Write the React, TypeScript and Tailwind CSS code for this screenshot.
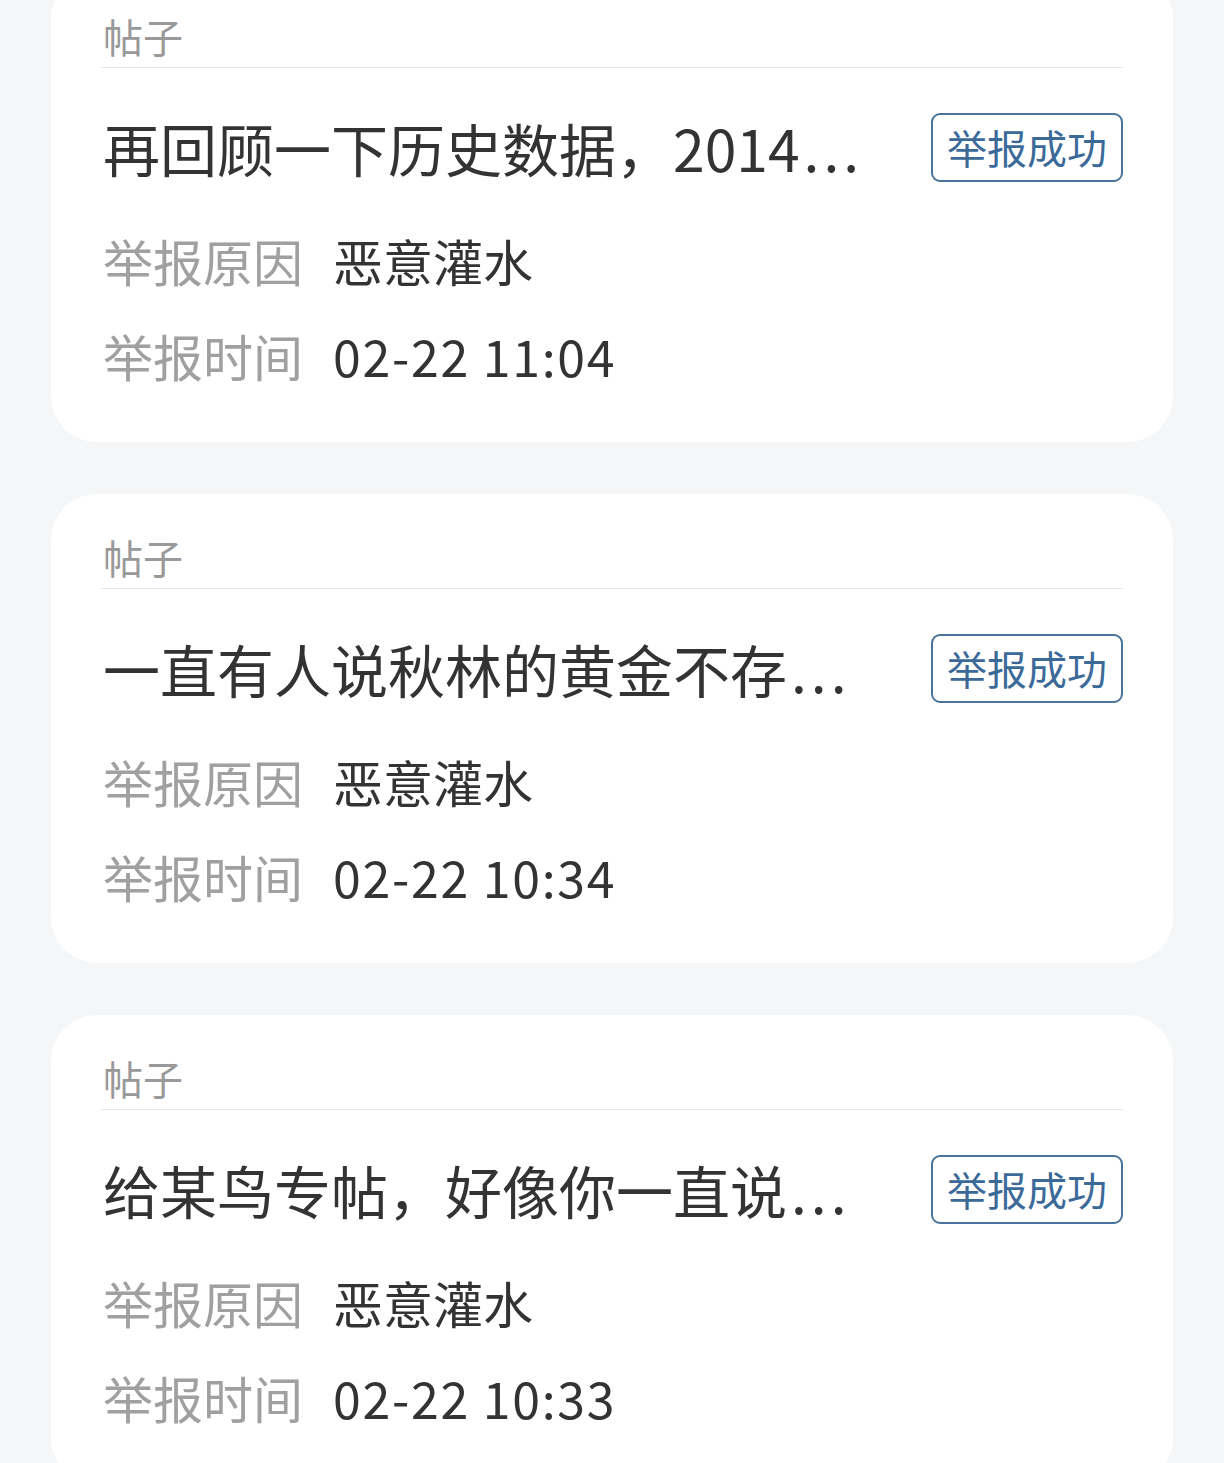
import React from "react";

const items = [
  { title: "再回顾一下历史数据，2014", reason: "恶意灌水", time: "02-22 11:04" },
  { title: "一直有人说秋林的黄金不存", reason: "恶意灌水", time: "02-22 10:34" },
  { title: "给某鸟专帖，好像你一直说", reason: "恶意灌水", time: "02-22 10:33" },
];

function Card({ title, reason, time }: { title: string; reason: string; time: string }) {
  return (
    <div className="rounded-[46px] bg-white px-[50px] pb-[52px]">
      <div className="h-[95px] pt-[35px] border-b border-[#e6e6e6]">
        <div className="text-[40px] leading-[56px] text-[#999999] pl-[2px]">帖子</div>
      </div>
      <div className="mt-[39px] h-[80px] flex items-center">
        <div className="flex-1 min-w-0 pl-[2px] pr-[40px]">
          <div className="text-[57px] leading-[80px] text-[#333333] whitespace-nowrap">
            {title}
            <span className="pl-[4px] tracking-[4px]">...</span>
          </div>
        </div>
        <div className="shrink-0 w-[192px] h-[69px] rounded-[9px] border-2 border-[#4a7399] flex items-center justify-center text-[40px] leading-none text-[#3b6a99]">
          举报成功
        </div>
      </div>
      <div className="mt-[38px] h-[70px] flex items-center pl-[2px] text-[50px] leading-[70px]">
        <span className="text-[#a0a0a0] w-[230px] shrink-0">举报原因</span>
        <span className="text-[#333333]">{reason}</span>
      </div>
      <div className="mt-[25px] h-[70px] flex items-center pl-[2px] text-[50px] leading-[70px]">
        <span className="text-[#a0a0a0] w-[230px] shrink-0">举报时间</span>
        <span className="text-[#333333] tracking-[1.7px]">{time}</span>
      </div>
    </div>
  );
}

export default function App() {
  return (
    <div
      className="min-h-[1463px] bg-[#f5f6f8] px-[51px] overflow-hidden"
      style={{ fontFamily: '"Noto Sans CJK SC", "Noto Sans", sans-serif' }}
    >
      <div className="-mt-[27px] flex flex-col gap-[52px]">
        {items.map((it, i) => (
          <Card key={i} {...it} />
        ))}
      </div>
    </div>
  );
}
